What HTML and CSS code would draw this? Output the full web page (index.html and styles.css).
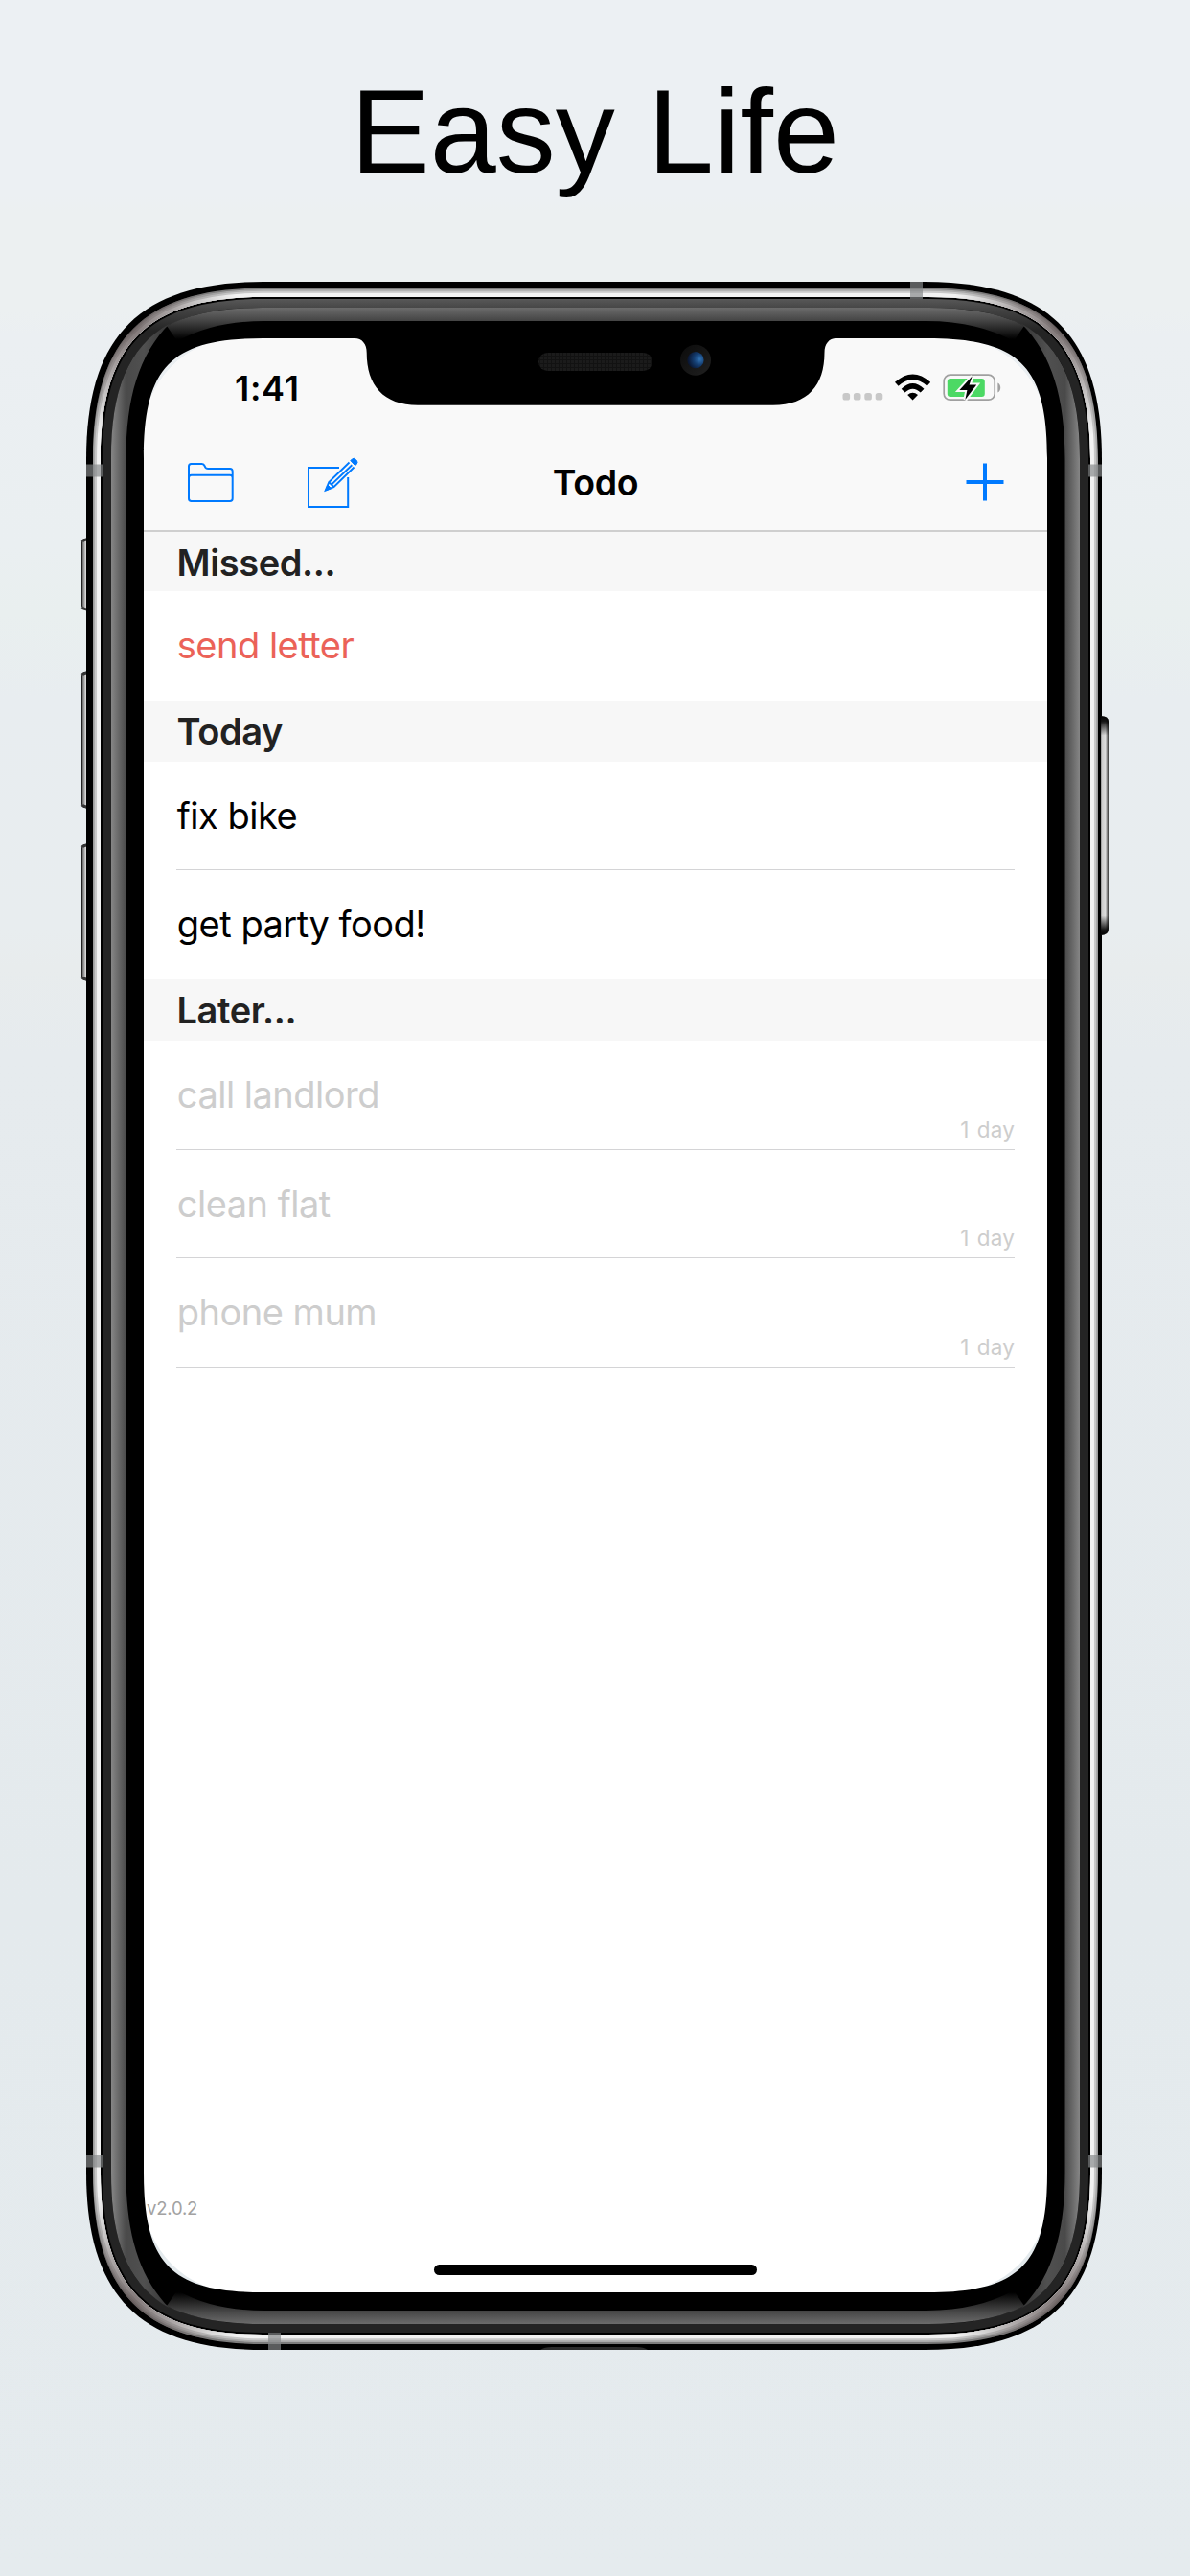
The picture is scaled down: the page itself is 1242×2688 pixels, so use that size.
FILE: index.html
```html
<!DOCTYPE html>
<html lang="en">
<head>
<meta charset="utf-8">
<title>Easy Life</title>
<link rel="stylesheet" href="styles.css">
</head>
<body>
<main class="poster">
  <h1 class="headline">Easy Life</h1>
  <section class="phone">
    <div class="screen">
      <div class="status">
        <span class="time">1:41</span>
        <svg class="status-icons" width="168" height="34" viewBox="876 387 168 34">
          <g fill="#c8c8c8"><rect x="878.5" y="410" width="7.6" height="7.6" rx="2.6"/><rect x="889.9" y="410" width="7.6" height="7.6" rx="2.6"/><rect x="901.3" y="410" width="7.6" height="7.6" rx="2.6"/><rect x="912.7" y="410" width="7.6" height="7.6" rx="2.6"/></g>
          <path d="M951.6 417.4 L946.2 412 Q951.6 407.6 957 412 Z"/>
          <path d="M941.6 407.6 Q951.6 398 961.6 407.6 M934.8 400.8 Q951.6 385.6 968.4 400.8" fill="none" stroke="#000" stroke-width="5.4"/>
          <rect x="984.2" y="391.2" width="53" height="26" rx="6.5" fill="none" stroke="#a0a0a0" stroke-width="1.7"/>
          <path d="M1040.4 399.5q2.8 1.4 2.8 5t-2.8 5z" fill="#a0a0a0"/>
          <rect x="987.8" y="395" width="39" height="19" rx="3.2" fill="#4cd964"/>
          <path d="M1013.6 392.5 L1000.4 407 H1008.4 L1006.4 417 L1018.2 401.5 H1010.6 Z" fill="#000" stroke="#f9f9f9" stroke-width="4" stroke-linejoin="miter" paint-order="stroke"/>
        </svg>
      </div>
      <nav class="navbar">
        <div class="tools">
          <svg width="50" height="56" viewBox="195 474 50 56" fill="none" stroke="#007aff" stroke-width="2"><path d="M199.5 483 H210.5 Q212.3 483 213.2 484.6 L214.4 486.7 Q215.2 488 217 488 H240 Q242.7 488 242.7 490.8 V519.2 Q242.7 522 240 522 H199.7 Q197 522 197 519.2 V485.6 Q197 483 199.5 483 Z M197 497.5 Q197 494.8 199.7 494.8 H240 Q242.7 494.8 242.7 497.5"/></svg>
          <svg width="56" height="56" viewBox="319 474 56 56" fill="none" stroke="#007aff" stroke-width="2"><path d="M354 487 H322 V528 H363.2 V497"/><path d="M364.5 481.5 L343.3 502 L339.8 510.5 L348.4 507.2 L369.5 486.5 M367.3 484.2 L346 504.6 M343.3 502 L348.4 507.2" stroke-width="1.9"/><path d="M339.5 511 L342 505 L345.6 508.7 Z" fill="#007aff" stroke-width="1"/><path d="M365.8 479.6 L367.5 477.9 Q369.4 476.5 371.3 478.4 L372.4 479.6 Q373.8 481.5 372.2 483.2 L370.8 484.8 Z" fill="#007aff" stroke-width="1"/></svg>
        </div>
        <span class="title">Todo</span>
        <svg class="plus" width="40" height="40" viewBox="0 0 40 40"><path d="M20 .5V39.5M.5 20H39.5" stroke="#007aff" stroke-width="4"/></svg>
      </nav>
      <h2 class="group">Missed...</h2>
      <ul class="rows"><li class="row missed"><span>send letter</span></li></ul>
      <h2 class="group">Today</h2>
      <ul class="rows"><li class="row ruled"><span>fix bike</span></li><li class="row"><span>get party food!</span></li></ul>
      <h2 class="group">Later...</h2>
      <ul class="rows">
        <li class="row ruled later"><span>call landlord</span><small>1 day</small></li>
        <li class="row ruled later"><span>clean flat</span><small>1 day</small></li>
        <li class="row ruled later"><span>phone mum</span><small>1 day</small></li>
      </ul>
      <footer class="foot"><span class="version">v2.0.2</span><div class="home"></div></footer>
    </div>
    <svg class="frame" width="1090" height="2180" viewBox="75 285 1090 2180">
      <defs>
        <linearGradient id="key" x1="0" x2="1"><stop offset="0" stop-color="#555"/><stop offset=".25" stop-color="#aaa"/><stop offset=".5" stop-color="#f4f4f4"/><stop offset=".75" stop-color="#ddd"/><stop offset="1" stop-color="#333"/></linearGradient>
        <linearGradient id="power" x1="0" x2="1"><stop offset="0" stop-color="#888"/><stop offset=".15" stop-color="#ccc"/><stop offset=".6" stop-color="#ddd"/><stop offset=".8" stop-color="#888"/><stop offset="1" stop-color="#333"/></linearGradient>
        <linearGradient id="cap" x1="0" y1="0" x2="0" y2="1"><stop offset="0"/><stop offset=".025" stop-color="#000" stop-opacity=".9"/><stop offset=".09" stop-color="#000" stop-opacity="0"/><stop offset=".91" stop-color="#000" stop-opacity="0"/><stop offset=".975" stop-color="#000" stop-opacity=".9"/><stop offset="1"/></linearGradient>
        <linearGradient id="band" gradientUnits="userSpaceOnUse" x1="0" y1="312" x2="0" y2="345"><stop offset="0" stop-color="#585858"/><stop offset=".3" stop-color="#454545"/><stop offset="1" stop-color="#242424"/></linearGradient>
        <linearGradient id="glassTop" gradientUnits="userSpaceOnUse" x1="0" y1="321" x2="0" y2="354"><stop offset="0" stop-color="#6c6c6c"/><stop offset=".42" stop-color="#444"/><stop offset="1" stop-color="#000"/></linearGradient>
        <linearGradient id="glassBottom" gradientUnits="userSpaceOnUse" x1="0" y1="2425" x2="0" y2="2392"><stop offset="0" stop-color="#6c6c6c"/><stop offset=".42" stop-color="#444"/><stop offset="1" stop-color="#000"/></linearGradient>
        <linearGradient id="glassLeft" gradientUnits="userSpaceOnUse" x1="116" y1="0" x2="178" y2="0"><stop offset="0" stop-color="#868686"/><stop offset=".25" stop-color="#4a4a4a"/><stop offset=".55" stop-color="#505050"/><stop offset="1" stop-color="#333"/></linearGradient>
        <linearGradient id="glassRight" gradientUnits="userSpaceOnUse" x1="1127" y1="0" x2="1065" y2="0"><stop offset="0" stop-color="#868686"/><stop offset=".25" stop-color="#4a4a4a"/><stop offset=".55" stop-color="#505050"/><stop offset="1" stop-color="#333"/></linearGradient>
        <radialGradient id="shade"><stop offset="0" stop-color="#5a4e4e" stop-opacity=".75"/><stop offset=".45" stop-color="#6a6060" stop-opacity=".5"/><stop offset="1" stop-color="#777" stop-opacity="0"/></radialGradient>
        <radialGradient id="lens" cx=".75" cy=".45" r=".7"><stop offset="0" stop-color="#3173b4"/><stop offset=".5" stop-color="#143d70"/><stop offset="1" stop-color="#0a1733"/></radialGradient>
        <linearGradient id="ring" x1="0" y1="0" x2="1" y2="1"><stop offset="0" stop-color="#0b0b0b"/><stop offset="1" stop-color="#202020"/></linearGradient>
        <pattern id="mesh" width="4" height="4" patternUnits="userSpaceOnUse"><rect width="4" height="4" fill="#121212"/><rect width="3" height="3" fill="#1b1b1b"/></pattern>
        <clipPath id="steelClip"><path clip-rule="evenodd" d="M276 300.5H967C1093 300.5 1146 353.5 1146 479.5V2267C1146 2393 1093 2446 967 2446H276C150 2446 97 2393 97 2267V479.5C97 353.5 150 300.5 276 300.5Z M274 310C153.500 310 105 358.500 105 479V2267C105 2387.500 153.500 2436 274 2436H969C1089.500 2436 1138 2387.500 1138 2267V479C1138 358.500 1089.500 310 969 310Z"/></clipPath>
        <mask id="cutout" maskUnits="userSpaceOnUse" x="75" y="285" width="1090" height="2180">
          <rect x="75" y="285" width="1090" height="2180" fill="#fff"/>
          <path d="M275 353H370C378 353 382.700 359 382.700 368C382.700 402 400 422.700 436 422.700H807C843 422.700 860.500 402 860.500 368C860.500 359 865 353 873 353H968C1064 353 1093 382 1093 478V2267C1093 2363 1064 2392 968 2392H275C179 2392 150 2363 150 2267V478C150 382 179 353 275 353Z" fill="#000"/>
        </mask>
      </defs>
      <g fill="url(#key)" stroke="#222" stroke-width="1"><rect x="85.500" y="562" width="10" height="74" rx="4"/><rect x="85.500" y="701" width="10" height="142" rx="4"/><rect x="85.500" y="881" width="10" height="142" rx="4"/></g>
      <g fill="none" stroke="#333" stroke-width="3"><path d="M86 565Q87 563 94 563M86 634Q87 636 94 636M86 704Q87 702 94 702M86 840Q87 842 94 842M86 884Q87 882 94 882M86 1020Q87 1022 94 1022"/></g>
      <g mask="url(#cutout)">
        <path d="M275 294H965C1094 294 1150 350 1150 479V2267C1150 2396 1094 2452 965 2452H275C146 2452 90 2396 90 2267V479C90 350 146 294 275 294Z"/>
        <g clip-path="url(#steelClip)">
          <rect x="90" y="294" width="1060" height="2158" fill="#7c7c7c"/>
          <g fill="none">
            <path d="M275 308.500H968C1089.500 308.500 1139.200 358 1139.200 479V2267C1139.200 2388 1089.500 2437.500 968 2437.500H275C153.500 2437.500 103.800 2388 103.800 2267V479C103.800 358 153.500 308.500 275 308.500Z" stroke="#aaa" stroke-width="13"/>
            <path d="M275 308.500H968C1089.500 308.500 1139.200 358 1139.200 479V2267C1139.200 2388 1089.500 2437.500 968 2437.500H275C153.500 2437.500 103.800 2388 103.800 2267V479C103.800 358 153.500 308.500 275 308.500Z" stroke="#c9c9c9" stroke-width="9.500"/>
            <path d="M275 308.500H968C1089.500 308.500 1139.200 358 1139.200 479V2267C1139.200 2388 1089.500 2437.500 968 2437.500H275C153.500 2437.500 103.800 2388 103.800 2267V479C103.800 358 153.500 308.500 275 308.500Z" stroke="#f2f2f2" stroke-width="5.500"/>
          </g>
          <g fill="url(#shade)"><circle cx="137" cy="344" r="115"/><circle cx="1106" cy="344" r="115"/><circle cx="137" cy="2402" r="115"/><circle cx="1106" cy="2402" r="115"/></g>
        </g>
        <path d="M274 312H969C1088.400 312 1136 359.600 1136 479V2267C1136 2386.400 1088.400 2434 969 2434H274C154.600 2434 107 2386.400 107 2267V479C107 359.600 154.600 312 274 312Z" fill="url(#band)"/>
        <path d="M274 321H969C1083.400 321 1127 364.600 1127 479V2267C1127 2381.400 1083.400 2425 969 2425H274C159.600 2425 116 2381.400 116 2267V479C116 364.600 159.600 321 274 321Z"/>
        <path d="M174 340Q210 321 274 321H969Q1033 321 1069 340L1058 356Q1020 335 967 335H275Q222 335 185 356Z" fill="url(#glassTop)"/>
        <path d="M174 2406Q210 2425 274 2425H969Q1033 2425 1069 2406L1058 2390Q1020 2411 967 2411H275Q222 2411 185 2390Z" fill="url(#glassBottom)"/>
        <path d="M116 479C116 407 133 363 177 337.500C145 370 131.500 415 131.500 479V2267C131.500 2331 145 2376 177 2408.500C133 2383 116 2339 116 2267Z" fill="url(#glassLeft)"/>
        <path d="M1127 479C1127 407 1110 363 1066 337.500C1098 370 1111.500 415 1111.500 479V2267C1111.500 2331 1098 2376 1066 2408.500C1110 2383 1127 2339 1127 2267Z" fill="url(#glassRight)"/>
      </g>
      <path d="M564 2452Q568 2449 576 2449H664Q672 2449 676 2452Z" fill="#2c2c2c"/>
      <g fill="#858789" fill-opacity=".68"><rect x="90" y="484.500" width="17" height="13"/><rect x="1136" y="484.500" width="14" height="13"/><rect x="90" y="2249" width="17" height="12.500"/><rect x="1136" y="2249" width="14" height="12.500"/><rect x="950" y="294" width="13" height="18"/><rect x="280" y="2434" width="13" height="18"/></g>
      <path d="M1149 747Q1157 747 1157 753V969Q1157 976 1149 976Z" fill="url(#power)"/>
      <path d="M1149 747Q1157 747 1157 753V969Q1157 976 1149 976Z" fill="url(#cap)"/>
      <rect x="562" y="368" width="119" height="19" rx="9.500" fill="url(#mesh)"/>
      <circle cx="726" cy="375.700" r="16" fill="url(#ring)"/>
      <circle cx="726" cy="375.700" r="8.600" fill="url(#lens)"/>
    </svg>
  </section>
</main>
</body>
</html>
```
FILE: styles.css
```css
* { box-sizing: border-box; }
body { margin: 0; font-family: Inter, "Liberation Sans", sans-serif; }
.poster {
  width: 1242px;
  height: 2688px;
  overflow: hidden;
  background: linear-gradient(#ecf0f3 0, #ecf0f3 205px, #ecf0f1 222px, #ecf0f1 325px, #ebeff2 350px, #eaeff1 570px, #e9efef 640px, #e8edf0 730px, #e8edef 970px, #e8eced 1010px, #e6ebee 1100px, #e4eaed 2000px, #e5ebee 2688px);
}
.headline {
  margin: 0;
  height: 285px;
  padding-top: 66px;
  font: 400 124px/143px "Liberation Sans", Arial, sans-serif;
  text-align: center;
}
.phone { position: relative; width: 1090px; height: 2180px; margin-left: 75px; padding: 68px 72px 73px 75px; }
.frame { position: absolute; left: 0; top: 0; display: block; }
.screen { display: flex; flex-direction: column; height: 2039px; background: #fff; border-radius: 100px; overflow: hidden; }
.status, .navbar { flex: none; background: #f9f9f9; }
.status { height: 100px; display: flex; justify-content: space-between; align-items: flex-start; padding: 34px 48px 0 95px; }
.time { font-size: 36px; line-height: 37px; font-weight: 600; letter-spacing: .7px; }
.navbar { height: 102px; display: grid; grid-template-columns: 1fr auto 1fr; align-items: center; padding: 0 45px; border-bottom: 2px solid #cfcfcf; }
.tools { display: flex; gap: 74px; }
.title { font-size: 37.500px; font-weight: 600; letter-spacing: -.4px; }
.plus { justify-self: end; }
.group { margin: 0; flex: none; height: 64px; padding-left: 34.500px; background: #f7f7f7; color: #222; font-size: 38px; line-height: 65px; font-weight: 600; letter-spacing: -.4px; }
.group:first-of-type { height: 62px; line-height: 64px; }
.rows { margin: 0; padding: 0 34px; list-style: none; }
.row { height: 113.700px; display: flex; justify-content: space-between; border-bottom: 1px solid transparent; font-size: 38px; line-height: 112px; }
.row span { padding-left: .8px; letter-spacing: -.5px; }
.ruled { border-color: #d4d4d6; }
.missed { color: #eb6258; }
.later { color: #cdcdcd; }
.row small { align-self: flex-end; padding-bottom: 6px; font-size: 22.500px; line-height: 28px; letter-spacing: .2px; word-spacing: 1.500px; }
.foot { flex: 1; display: flex; flex-direction: column; justify-content: flex-end; align-items: center; padding-bottom: 18px; }
.version { align-self: flex-start; margin: 0 0 46px 3px; color: #a2a2a2; font-size: 18.500px; line-height: 26px; letter-spacing: -.2px; }
.home { width: 337px; height: 11px; border-radius: 6px; background: #000; }
```
